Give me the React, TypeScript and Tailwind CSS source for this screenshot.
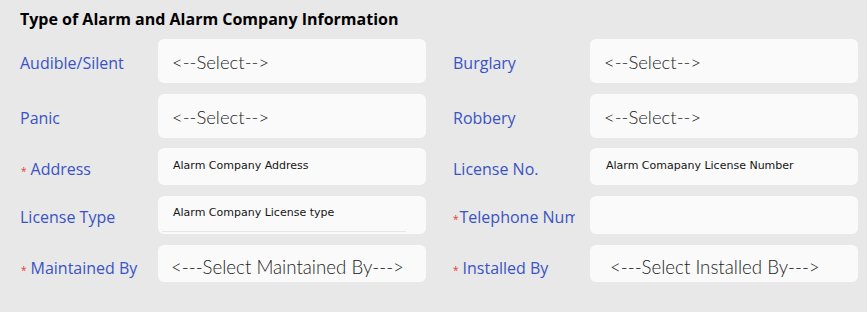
const label = "font-['Open_Sans',sans-serif] text-[16px] leading-[24px] text-[#3a53c4] whitespace-nowrap";
const selectText = "font-['Lato',sans-serif] font-light leading-[22px] text-[#1c1c1c] whitespace-nowrap";
const placeholder = "font-['DejaVu_Sans',sans-serif] text-[11px] leading-[13px] text-[#151515] whitespace-nowrap";

function Star({ space = true }: { space?: boolean }) {
    return (
        <span className={`text-[#e53935] text-[10px] leading-none ${space ? 'mr-[4px]' : 'mr-[1px]'}`}>*</span>
    )
}

function Box({ children, h, className = '' }: { children?: React.ReactNode, h: string, className?: string }) {
    return (
        <div className={`w-[268px] ${h} rounded-[6px] bg-[#fafafa] shrink-0 ${className}`}>
            {children}
        </div>
    )
}

export default function App() {
    return (
        <main className="w-[867px] h-[312px] overflow-hidden bg-[#e8e8e8] pl-[20px] pt-[7px]">
            <h1 className="font-['Open_Sans',sans-serif] font-bold text-[16px] leading-[24px] text-black">
                Type of Alarm and Alarm Company Information
            </h1>

            <div className="flex flex-col mt-[8px]">
                {/* row 1 */}
                <div className="flex h-[44px]">
                    <div className={`w-[138px] pt-[12px] ${label}`}>Audible/Silent</div>
                    <Box h="h-[44px]" className="pl-[14px] pt-[12px]">
                        <div className={`${selectText} text-[18.5px]`}>&lt;--Select--&gt;</div>
                    </Box>
                    <div className={`w-[137px] ml-[27px] pt-[12px] ${label}`}>Burglary</div>
                    <Box h="h-[44px]" className="pl-[14px] pt-[12px]">
                        <div className={`${selectText} text-[18.5px]`}>&lt;--Select--&gt;</div>
                    </Box>
                </div>

                {/* row 2 */}
                <div className="flex h-[44px] mt-[11px]">
                    <div className={`w-[138px] pt-[12px] ${label}`}>Panic</div>
                    <Box h="h-[44px]" className="pl-[14px] pt-[12px]">
                        <div className={`${selectText} text-[18.5px]`}>&lt;--Select--&gt;</div>
                    </Box>
                    <div className={`w-[137px] ml-[27px] pt-[12px] ${label}`}>Robbery</div>
                    <Box h="h-[44px]" className="pl-[14px] pt-[12px]">
                        <div className={`${selectText} text-[18.5px]`}>&lt;--Select--&gt;</div>
                    </Box>
                </div>

                {/* row 3 */}
                <div className="flex h-[37px] mt-[10px]">
                    <div className={`w-[138px] pt-[9px] pl-[1px] ${label}`}><Star />Address</div>
                    <Box h="h-[37px]" className="pl-[15px] pt-[11px]">
                        <div className={placeholder}>Alarm Company Address</div>
                    </Box>
                    <div className={`w-[137px] ml-[27px] pt-[9px] ${label}`}>License No.</div>
                    <Box h="h-[37px]" className="pl-[16px] pt-[11px]">
                        <div className={placeholder}>Alarm Comapany License Number</div>
                    </Box>
                </div>

                {/* row 4 */}
                <div className="flex h-[38px] mt-[11px]">
                    <div className={`w-[138px] pt-[9px] ${label}`}>License Type</div>
                    <Box h="h-[38px]" className="relative pl-[15px] pt-[10px]">
                        <div className={placeholder}>Alarm Company License type</div>
                        <div className="absolute left-[4px] bottom-[2px] w-[244px] h-px bg-[#e6e6e6]" />
                    </Box>
                    <div className="w-[137px] ml-[27px] pr-[15px] pt-[9px]">
                        <div className={`overflow-hidden ${label}`}><Star space={false} />Telephone Number</div>
                    </div>
                    <Box h="h-[38px]" />
                </div>

                {/* row 5 */}
                <div className="flex h-[37px] mt-[11px]">
                    <div className={`w-[138px] pt-[11px] pl-[1px] ${label}`}><Star />Maintained By</div>
                    <Box h="h-[37px]" className="pl-[13px] pt-[11px]">
                        <div className={`${selectText} text-[18.7px]`}>&lt;---Select Maintained By---&gt;</div>
                    </Box>
                    <div className={`w-[137px] ml-[27px] pt-[11px] ${label}`}><Star />Installed By</div>
                    <Box h="h-[37px]" className="pl-[20px] pt-[11px]">
                        <div className={`${selectText} text-[18.7px]`}>&lt;---Select Installed By---&gt;</div>
                    </Box>
                </div>
            </div>
        </main>
    )
}
